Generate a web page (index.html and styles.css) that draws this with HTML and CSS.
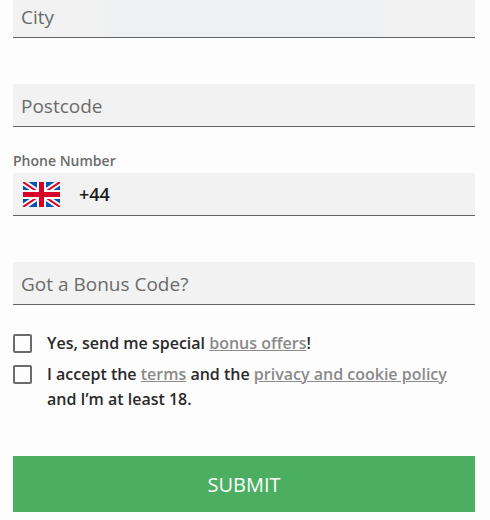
FILE: index.html
```html
<!DOCTYPE html>
<html lang="en">
<head>
  <meta charset="UTF-8" />
  <meta name="viewport" content="width=device-width, initial-scale=1.0"/>
  <title>Sign up</title>
  <link rel="stylesheet" href="styles.css">
</head>
<body>
  <form class="signup">
    <div class="field">
      <input class="field-input field-tinted" type="text" name="city" placeholder="City" aria-label="City">
    </div>

    <div class="field">
      <input class="field-input" type="text" name="postcode" placeholder="Postcode" aria-label="Postcode">
    </div>

    <div class="field">
      <label class="field-label" for="phone">Phone Number</label>
      <div class="phone">
        <svg class="flag" viewBox="0 0 37 25" aria-hidden="true">
          <rect width="37" height="25" fill="#0052b4"/>
          <path d="M0 0L37 25M37 0L0 25" stroke="#fff" stroke-width="6"/>
          <path d="M0 0L18.5 12.5M37 0L18.5 12.5M37 25L18.5 12.5M0 25L18.5 12.5" stroke="#d80027" stroke-width="2"/>
          <path d="M18.5 0V25M0 12.5H37" stroke="#fff" stroke-width="9"/>
          <path d="M18.5 0V25M0 12.5H37" stroke="#d80027" stroke-width="5"/>
        </svg>
        <input class="phone-input" type="tel" id="phone" name="phone" value="+44">
      </div>
    </div>

    <div class="field">
      <input class="field-input" type="text" name="bonus" placeholder="Got a Bonus Code?" aria-label="Got a Bonus Code?">
    </div>

    <div class="checks">
      <div class="check">
        <input class="check-box" type="checkbox" id="offers" name="offers">
        <label for="offers">Yes, send me special <a href="#offers">bonus offers</a>!</label>
      </div>
      <div class="check">
        <input class="check-box" type="checkbox" id="accept" name="accept">
        <label for="accept">I accept the <a href="#terms">terms</a> and the <a href="#privacy">privacy and cookie policy</a> and I’m at least 18.</label>
      </div>
    </div>

    <button class="submit" type="submit">SUBMIT</button>
  </form>
</body>
</html>
```

FILE: styles.css
```css
* {
  box-sizing: border-box;
}
body {
  margin: 0;
  background-color: #fdfdfd;
  font-family: "Open Sans", sans-serif;
  color: #2a2a2a;
  overflow: hidden;
}
.signup {
  margin-top: -51px;
  padding: 0 15px 8px 13px;
}
.field {
  display: flex;
  flex-direction: column;
  justify-content: flex-end;
  height: 89px;
}
.field-label {
  font-size: 14px;
  font-weight: 600;
  line-height: 24px;
  color: #6b6b6b;
}
.field-input,
.phone {
  width: 100%;
  height: 43px;
  border: 0;
  border-bottom: 1px solid #636363;
  border-radius: 0;
  background-color: #f2f2f2;
}
.field-input {
  padding: 2px 8px 0;
  font-family: inherit;
  font-size: 19px;
  color: #2a2a2a;
}
.field-input::placeholder {
  color: #6b6b6b;
  opacity: 1;
}
.field-tinted {
  background-image: linear-gradient(to right, transparent 20%, #f0f1f3 20%, #f0f1f3 80%, transparent 80%);
}
.phone {
  display: flex;
  align-items: center;
  gap: 19px;
  padding: 0 10px;
}
.flag {
  width: 37px;
  height: 25px;
}
.phone-input {
  flex: 1;
  min-width: 0;
  padding: 0;
  border: 0;
  background: none;
  font-family: inherit;
  font-size: 18px;
  font-weight: 600;
  color: #1c1c1c;
}
.checks {
  margin-top: 26px;
  font-size: 16px;
  font-weight: 600;
  line-height: 25px;
}
.check {
  display: flex;
  align-items: flex-start;
  gap: 15px;
  margin-bottom: 6px;
}
.check a {
  color: #8a8a8a;
}
.check-box {
  appearance: none;
  flex: none;
  width: 19px;
  height: 19px;
  margin: 3px 0 0;
  border: 2px solid #6b6b6b;
  border-radius: 2px;
}
.check-box:checked {
  background-color: #4bae60;
}
.submit {
  display: block;
  width: 100%;
  height: 56px;
  margin-top: 44px;
  border: 0;
  background-color: #4bae60;
  font-family: inherit;
  font-size: 20px;
  color: #fff;
}
```
